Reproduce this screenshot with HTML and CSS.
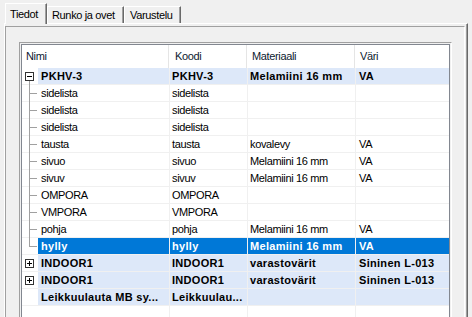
FILE: index.html
```html
<!DOCTYPE html>
<html lang="fi">
<head>
<meta charset="UTF-8">
<title>Tiedot</title>
<link rel="stylesheet" href="styles.css">
</head>
<body>

<div class="tabs">
    <div class="tab active tab-tiedot">Tiedot</div>
    <div class="tab tab-runko">Runko ja ovet</div>
    <div class="tab tab-varustelu">Varustelu</div>
</div>

<div class="page">
    <div class="inner">
        <div class="frame">
            <div class="list">
                <div class="head">
                    <div class="h h1">Nimi</div>
                    <div class="h h2">Koodi</div>
                    <div class="h h3">Materiaali</div>
                    <div class="h h4">Väri</div>
                </div>

                <div class="row grp b">
                    <div class="t open"><span class="box"></span></div>
                    <div class="c c1">PKHV-3</div>
                    <div class="c c2">PKHV-3</div>
                    <div class="c c3">Melamiini 16 mm</div>
                    <div class="c c4">VA</div>
                </div>
                <div class="row">
                    <div class="t kid"></div>
                    <div class="c c1">sidelista</div>
                    <div class="c c2">sidelista</div>
                    <div class="c c3"></div>
                    <div class="c c4"></div>
                </div>
                <div class="row">
                    <div class="t kid"></div>
                    <div class="c c1">sidelista</div>
                    <div class="c c2">sidelista</div>
                    <div class="c c3"></div>
                    <div class="c c4"></div>
                </div>
                <div class="row">
                    <div class="t kid"></div>
                    <div class="c c1">sidelista</div>
                    <div class="c c2">sidelista</div>
                    <div class="c c3"></div>
                    <div class="c c4"></div>
                </div>
                <div class="row">
                    <div class="t kid"></div>
                    <div class="c c1">tausta</div>
                    <div class="c c2">tausta</div>
                    <div class="c c3">kovalevy</div>
                    <div class="c c4">VA</div>
                </div>
                <div class="row">
                    <div class="t kid"></div>
                    <div class="c c1">sivuo</div>
                    <div class="c c2">sivuo</div>
                    <div class="c c3">Melamiini 16 mm</div>
                    <div class="c c4">VA</div>
                </div>
                <div class="row">
                    <div class="t kid"></div>
                    <div class="c c1">sivuv</div>
                    <div class="c c2">sivuv</div>
                    <div class="c c3">Melamiini 16 mm</div>
                    <div class="c c4">VA</div>
                </div>
                <div class="row">
                    <div class="t kid"></div>
                    <div class="c c1">OMPORA</div>
                    <div class="c c2">OMPORA</div>
                    <div class="c c3"></div>
                    <div class="c c4"></div>
                </div>
                <div class="row">
                    <div class="t kid"></div>
                    <div class="c c1">VMPORA</div>
                    <div class="c c2">VMPORA</div>
                    <div class="c c3"></div>
                    <div class="c c4"></div>
                </div>
                <div class="row">
                    <div class="t kid"></div>
                    <div class="c c1">pohja</div>
                    <div class="c c2">pohja</div>
                    <div class="c c3">Melamiini 16 mm</div>
                    <div class="c c4">VA</div>
                </div>
                <div class="row sel b">
                    <div class="t kid last"></div>
                    <div class="c c1">hylly</div>
                    <div class="c c2">hylly</div>
                    <div class="c c3">Melamiini 16 mm</div>
                    <div class="c c4">VA</div>
                </div>
                <div class="row grp b">
                    <div class="t"><span class="box plus"></span></div>
                    <div class="c c1">INDOOR1</div>
                    <div class="c c2">INDOOR1</div>
                    <div class="c c3">varastovärit</div>
                    <div class="c c4">Sininen L-013</div>
                </div>
                <div class="row grp b">
                    <div class="t"><span class="box plus"></span></div>
                    <div class="c c1">INDOOR1</div>
                    <div class="c c2">INDOOR1</div>
                    <div class="c c3">varastovärit</div>
                    <div class="c c4">Sininen L-013</div>
                </div>
                <div class="row grp b">
                    <div class="t"></div>
                    <div class="c c1">Leikkuulauta MB sy...</div>
                    <div class="c c2">Leikkuulau...</div>
                    <div class="c c3"></div>
                    <div class="c c4"></div>
                </div>

                <div class="row fill">
                    <div class="t"></div>
                    <div class="c c1"></div>
                    <div class="c c2"></div>
                    <div class="c c3"></div>
                    <div class="c c4"></div>
                </div>
            </div>
        </div>
    </div>
</div>

</body>
</html>
```

FILE: styles.css
```css
* {
    box-sizing: border-box;
}

body {
    margin: 0;
    height: 317px;
    overflow: hidden;
    background: #f0f0f0;
    font-family: "Liberation Sans", Arial, sans-serif;
    font-size: 11px;
    letter-spacing: -0.35px;
    color: #000;
}

/* tab strip */
.tabs {
    display: flex;
    align-items: flex-end;
    height: 23px;
    padding-left: 5px;
}

.tab {
    height: 17px;
    line-height: 16px;
    padding-left: 4px;
    white-space: nowrap;
    border-left: 1px solid #fff;
    border-top: 1px solid #fff;
    border-right: 1px solid #696969;
    box-shadow: inset -1px 0 #a0a0a0;
}

.tab.active {
    position: relative;
    height: 21px;
    margin-bottom: -1px;
    padding-top: 2px;
    background: #f0f0f0;
}

.tab-tiedot { width: 42px; }
.tab-runko { width: 77px; }
.tab-varustelu { width: 57px; padding-left: 5px; }

/* tab page */
.page {
    margin-left: 4px;
    width: 464px;
    height: 300px;
    padding: 2px 2px 0 0;
    border-top: 1px solid #fff;
    border-left: 1px solid #fff;
    border-right: 1px solid #696969;
    box-shadow: inset -1px 0 #a0a0a0;
}

.inner {
    height: 100%;
    padding: 15px 0 0 13px;
    border-top: 1px solid #a0a0a0;
    border-left: 1px solid #a0a0a0;
    border-right: 1px solid #fff;
}

.frame {
    width: 433px;
    padding: 1px;
    border-top: 1px solid #a0a0a0;
    border-left: 1px solid #a0a0a0;
    border-right: 1px solid #fff;
}

.list {
    background: #fff;
    border: 1px solid #828790;
}

/* header */
.head {
    display: flex;
    height: 23px;
    line-height: 23px;
    color: #0d1a30;
}

.h {
    padding-left: 5px;
    border-right: 1px solid #e5e5e5;
}

.h1 { width: 147px; padding-left: 4px; }
.h2 { width: 78px; padding-left: 6px; }
.h3 { width: 108px; }
.h4 { flex: 1; border-right: none; }

/* rows */
.row {
    display: flex;
    height: 17px;
    line-height: 16px;
    border-bottom: 1px solid #f0f0f0;
}

.c {
    padding-left: 2px;
    white-space: nowrap;
    overflow: hidden;
    border-right: 1px solid #f0f0f0;
}

.c1 { width: 132px; padding-left: 3px; }
.c2 { width: 78px; }
.c3 { width: 108px; }
.c4 { flex: 1; padding-left: 3px; border-right: none; }

.b {
    font-weight: bold;
    letter-spacing: 0.3px;
}

.grp .c {
    background: #dde8f9;
}

.sel .c {
    background: #0078d7;
    color: #fff;
}

.fill {
    height: 60px;
    border-bottom: none;
}

/* tree */
.t {
    position: relative;
    width: 16px;
}

.kid::before {
    content: "";
    position: absolute;
    left: 7px;
    top: 0;
    bottom: -1px;
    border-left: 1px solid #a0a0a0;
}

.kid.last::before {
    bottom: 8px;
}

.kid::after {
    content: "";
    position: absolute;
    left: 7px;
    top: 8px;
    width: 8px;
    border-top: 1px solid #a0a0a0;
}

.open::after {
    content: "";
    position: absolute;
    left: 7px;
    top: 13px;
    bottom: -1px;
    border-left: 1px solid #a0a0a0;
}

.box {
    position: absolute;
    left: 3px;
    top: 4px;
    width: 9px;
    height: 9px;
    background: #fff;
    border: 1px solid #333;
}

.box::before {
    content: "";
    position: absolute;
    left: 1px;
    top: 3px;
    width: 5px;
    height: 1px;
    background: #000;
}

.box.plus::after {
    content: "";
    position: absolute;
    left: 3px;
    top: 1px;
    width: 1px;
    height: 5px;
    background: #000;
}
```
